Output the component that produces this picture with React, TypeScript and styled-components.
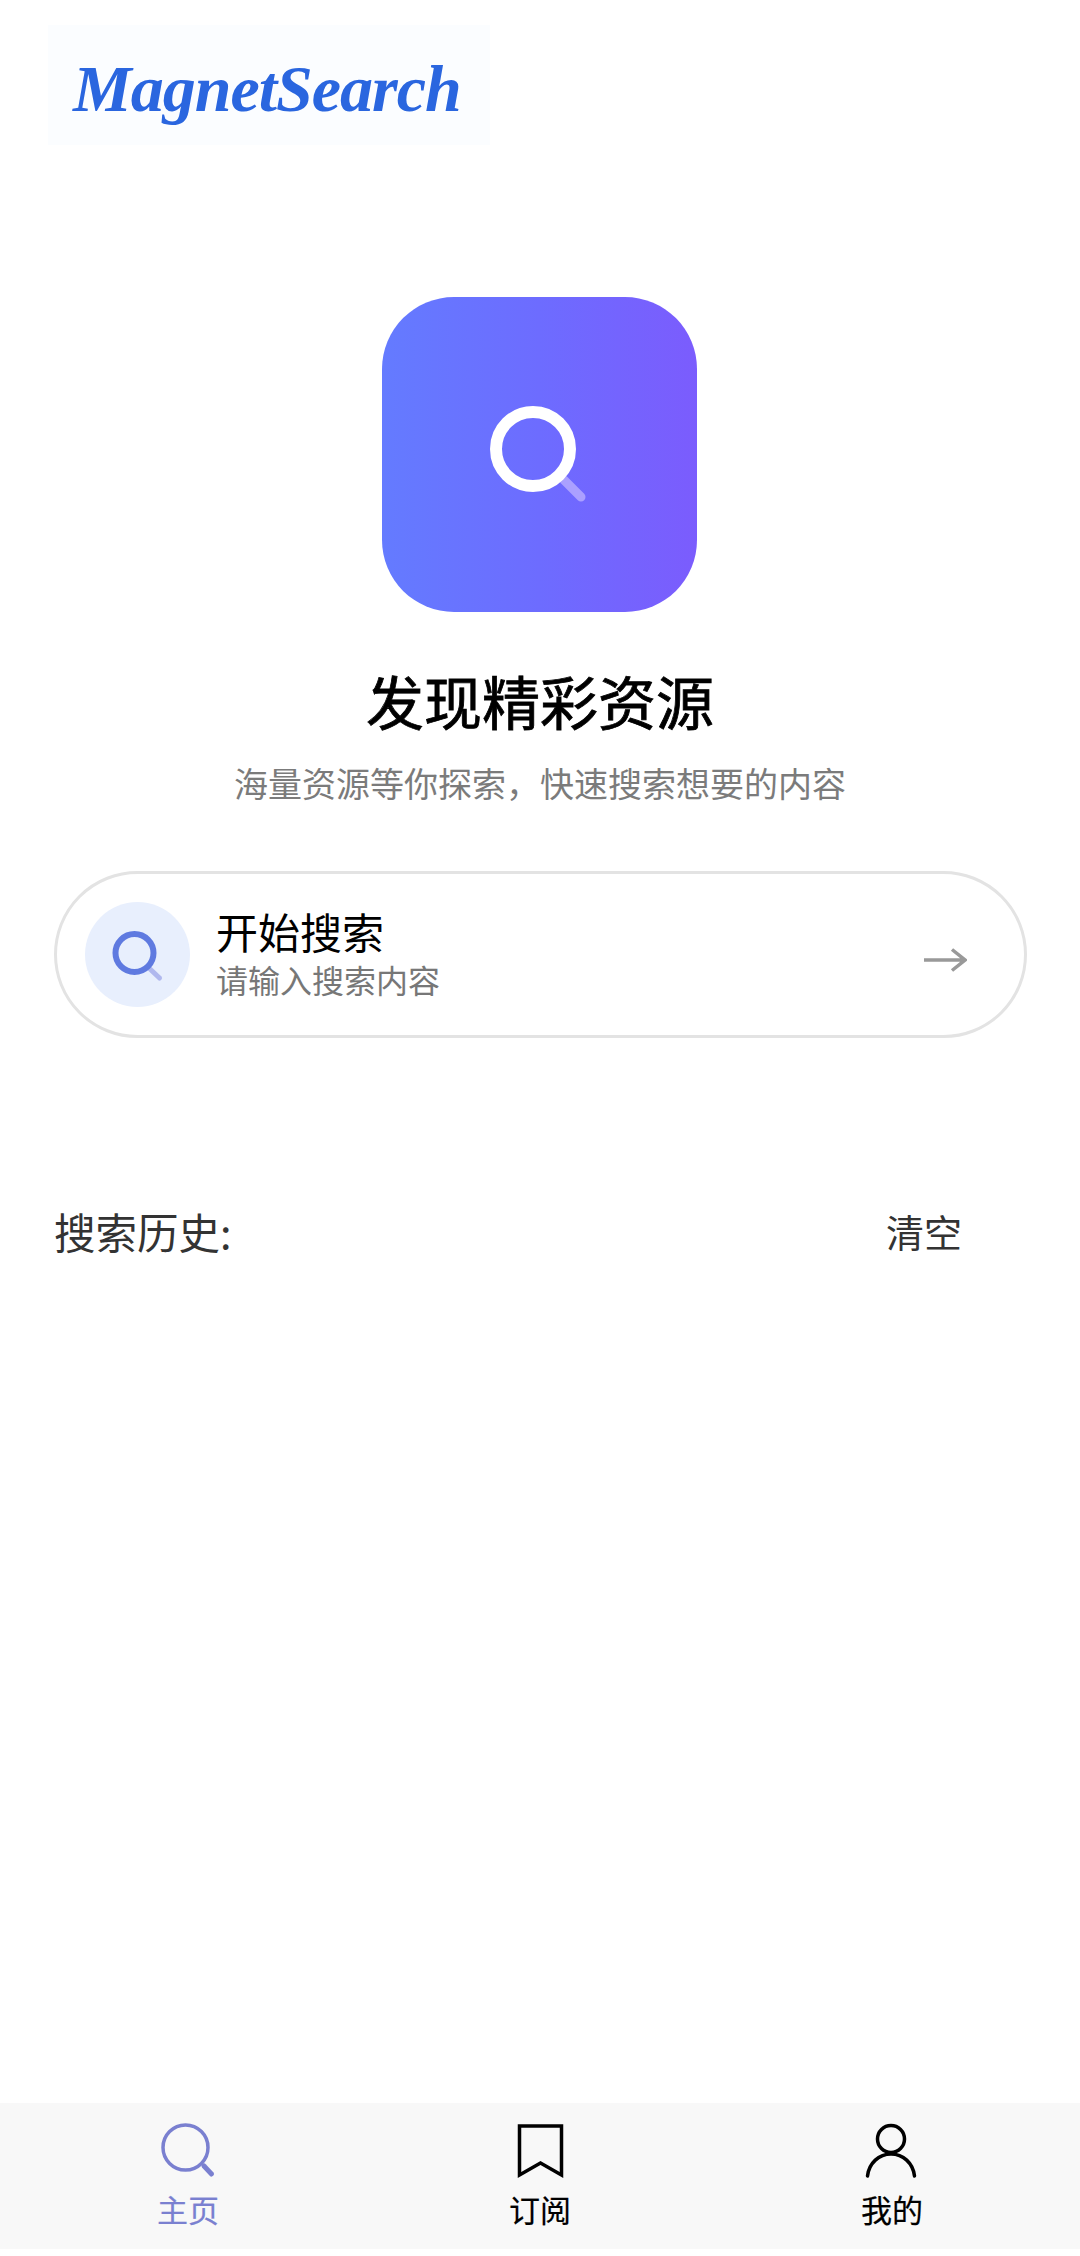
import React, { FC } from "react"
import styled, { createGlobalStyle } from "styled-components"

const GlobalStyle = createGlobalStyle`
    html, body {
        margin: 0;
        padding: 0;
        background: #ffffff;
    }
    * {
        box-sizing: border-box;
    }
`

const Page = styled.div`
    width: 1080px;
    height: 2256px;
    display: flex;
    flex-direction: column;
    background: #ffffff;
    font-family: "Noto Sans CJK SC", "Noto Sans", sans-serif;
`

const LogoBox = styled.div`
    width: 442px;
    height: 120px;
    margin: 25px 0 0 48px;
    padding: 8px 0 0 25px;
    display: flex;
    align-items: center;
    background: #fbfdff;
`

const LogoText = styled.span`
    font-family: "Liberation Serif", serif;
    font-style: italic;
    font-weight: 700;
    font-size: 66px;
    line-height: 1;
    letter-spacing: -1px;
    color: #2a66df;
    white-space: nowrap;
`

const Hero = styled.section`
    display: flex;
    flex-direction: column;
    align-items: center;
`

const HeroBadge = styled.div`
    width: 315px;
    height: 315px;
    margin: 152px 1px 0 0;
    display: flex;
    align-items: center;
    justify-content: center;
    border-radius: 72px;
    background: linear-gradient(90deg, #647bff 0%, #6d6cff 50%, #7b5cfd 100%);
`

const HeroTitle = styled.h1`
    margin: 48px 0 0;
    font-size: 58px;
    font-weight: 400;
    line-height: 80px;
    color: #000000;
    -webkit-text-stroke: 0.8px #000000;
`

const HeroSubtitle = styled.p`
    margin: 18px 0 0;
    font-size: 34px;
    font-weight: 400;
    line-height: 50px;
    color: #7b7b7b;
`

const SearchCard = styled.div`
    width: 973px;
    height: 167px;
    margin: 63px 0 0 54px;
    padding: 0 57px 0 28px;
    display: flex;
    align-items: center;
    border: 3px solid #e3e3e3;
    border-radius: 84px;
    background: #ffffff;
`

const SearchBubble = styled.div`
    width: 105px;
    height: 105px;
    flex-shrink: 0;
    display: flex;
    align-items: center;
    justify-content: center;
    border-radius: 50%;
    background: #e8effd;
`

const SearchCopy = styled.div`
    flex: 1;
    margin: 0 0 1px 26px;
    display: flex;
    flex-direction: column;
`

const SearchTitle = styled.span`
    font-size: 42px;
    font-weight: 400;
    line-height: 50px;
    color: #000000;
`

const SearchHint = styled.span`
    font-size: 32px;
    font-weight: 400;
    line-height: 46px;
    color: #777777;
`

const ArrowSlot = styled.div`
    margin-top: 10px;
    display: flex;
`

const HistoryHeader = styled.div`
    margin-top: 168px;
    padding: 0 118px 0 54px;
    display: flex;
    align-items: center;
    justify-content: space-between;
`

const HistoryTitle = styled.span`
    font-size: 41.5px;
    line-height: 50px;
    color: #333333;
`

const ClearButton = styled.span`
    font-size: 38px;
    line-height: 50px;
    color: #333333;
`

const TabBar = styled.nav`
    height: 146px;
    margin-top: auto;
    margin-bottom: 7px;
    padding: 20px 12px 0;
    display: grid;
    grid-template-columns: repeat(3, 1fr);
    background: #f8f8f8;
`

const TabItem = styled.div<{ $active?: boolean }>`
    display: flex;
    flex-direction: column;
    align-items: center;
    color: ${(props) => (props.$active ? "#7a80d0" : "#000000")};
`

const TabLabel = styled.span`
    margin-top: 7px;
    font-size: 31px;
    font-weight: 400;
    line-height: 46px;
    -webkit-text-stroke: 0.2px currentColor;
`

const HeroSearchIcon: FC = () => (
    <svg width="100" height="100" viewBox="0 0 100 100" fill="none">
        <path d="M74 75 L91 92" stroke="#aba0ff" strokeWidth="9" strokeLinecap="round" />
        <circle cx="43" cy="44" r="37" stroke="#ffffff" strokeWidth="12" />
    </svg>
)

const BubbleSearchIcon: FC = () => (
    <svg width="58" height="58" viewBox="0 0 58 58" fill="none">
        <path d="M41 43 L50.5 52" stroke="#b0b8ee" strokeWidth="5" strokeLinecap="round" />
        <circle cx="25.5" cy="27" r="19" stroke="#5f7ae0" strokeWidth="6" />
    </svg>
)

const ArrowIcon: FC = () => (
    <svg width="43" height="24" viewBox="0 0 43 24" fill="none">
        <path d="M0 12 H41 M28 1.5 L41 12 L28 22.5" stroke="#999999" strokeWidth="3.5" />
    </svg>
)

const TabSearchIcon: FC = () => (
    <svg width="56" height="56" viewBox="0 0 56 56" fill="none" stroke="currentColor" strokeLinecap="round">
        <circle cx="25.5" cy="24.5" r="22.5" strokeWidth="3.5" />
        <path d="M44 43 L51.5 51" strokeWidth="5" />
    </svg>
)

const BookmarkIcon: FC = () => (
    <svg width="56" height="56" viewBox="0 0 56 56" fill="none" stroke="currentColor" strokeWidth="3.5" strokeLinejoin="miter">
        <path d="M7.5 3 H49.5 V52 L28.5 40 L7.5 52 Z" />
    </svg>
)

const PersonIcon: FC = () => (
    <svg width="56" height="56" viewBox="0 0 56 56" fill="none" stroke="currentColor" strokeWidth="3.5" strokeLinecap="round">
        <circle cx="27" cy="16" r="13.5" />
        <path d="M3.5 53 C5 40 15 31 27 31 C39 31 49 40 50.5 53" />
    </svg>
)

const App: FC = () => (
    <Page>
        <GlobalStyle />
        <LogoBox>
            <LogoText>MagnetSearch</LogoText>
        </LogoBox>
        <Hero>
            <HeroBadge>
                <HeroSearchIcon />
            </HeroBadge>
            <HeroTitle>发现精彩资源</HeroTitle>
            <HeroSubtitle>海量资源等你探索，快速搜索想要的内容</HeroSubtitle>
        </Hero>
        <SearchCard>
            <SearchBubble>
                <BubbleSearchIcon />
            </SearchBubble>
            <SearchCopy>
                <SearchTitle>开始搜索</SearchTitle>
                <SearchHint>请输入搜索内容</SearchHint>
            </SearchCopy>
            <ArrowSlot>
                <ArrowIcon />
            </ArrowSlot>
        </SearchCard>
        <HistoryHeader>
            <HistoryTitle>搜索历史:</HistoryTitle>
            <ClearButton>清空</ClearButton>
        </HistoryHeader>
        <TabBar>
            <TabItem $active>
                <TabSearchIcon />
                <TabLabel>主页</TabLabel>
            </TabItem>
            <TabItem>
                <BookmarkIcon />
                <TabLabel>订阅</TabLabel>
            </TabItem>
            <TabItem>
                <PersonIcon />
                <TabLabel>我的</TabLabel>
            </TabItem>
        </TabBar>
    </Page>
)

export default App
